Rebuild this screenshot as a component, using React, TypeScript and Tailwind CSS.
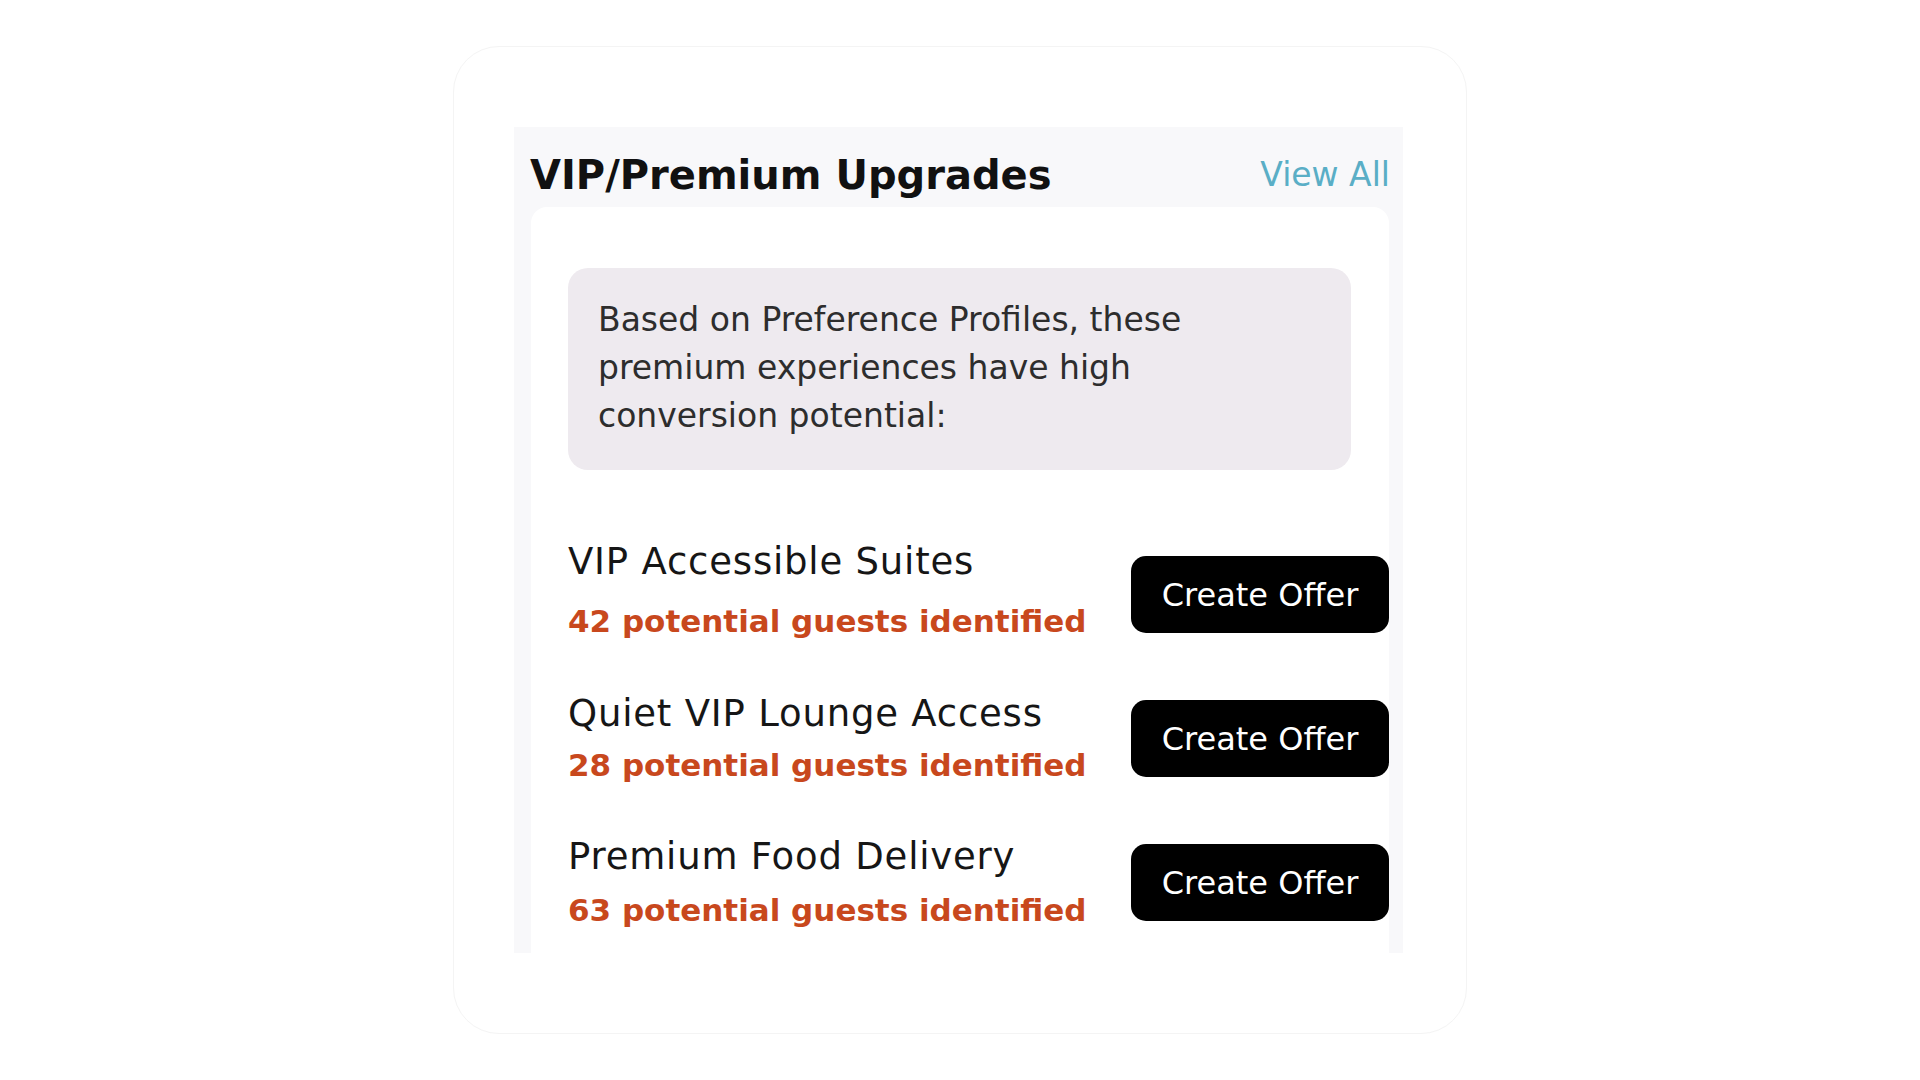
import React from "react";

const rows = [
  { name: "VIP Accessible Suites", count: "42 potential guests identified", gap: "gap-[17px]", mt: "mt-[70px]", btn: "mt-[8px]" },
  { name: "Quiet VIP Lounge Access", count: "28 potential guests identified", gap: "gap-[9px]", mt: "mt-[51px]", btn: "mt-0" },
  { name: "Premium Food Delivery", count: "63 potential guests identified", gap: "gap-[11px]", mt: "mt-[50px]", btn: "mt-0" },
];

export default function App() {
  return (
    <div className="w-full h-[1080px] bg-white flex items-center justify-center" style={{ fontFamily: "'DejaVu Sans', sans-serif" }}>
      <div className="w-[1014px] h-[988px] rounded-[46px] border border-[#f4f4f4] bg-white pl-[60px] pt-[80px]">
        <div className="w-[889px] h-[826px] bg-[#f8f8fa] flex flex-col overflow-hidden">
          <div className="h-[80px] pt-[16px] pl-[16px] pr-[13px] flex items-center justify-between">
            <span className="text-[40px] leading-[48px] font-semibold text-[#111111]">VIP/Premium Upgrades</span>
            <span className="text-[33px] leading-[40px] text-[#5aaec6]">View All</span>
          </div>
          <div className="ml-[17px] w-[858px] flex-1 bg-white rounded-t-[16px] pl-[37px]">
            <div className="mt-[61px] mr-[38px] h-[202px] rounded-[20px] bg-[#eeeaef] pl-[30px] pt-[28px]">
              <p className="w-[680px] text-[33px] leading-[48px] text-[#2d2d2d]">
                Based on Preference Profiles, these premium experiences have high conversion potential:
              </p>
            </div>
            {rows.map((r) => (
              <div key={r.name} className={`${r.mt} flex items-center justify-between`}>
                <div className={`flex flex-col items-start ${r.gap}`}>
                  <span className="text-[37px] leading-[44px] tracking-[0.8px] text-[#161616]">{r.name}</span>
                  <span className="text-[31px] leading-[40px] font-bold text-[#c8481d]">{r.count}</span>
                </div>
                <button className={`${r.btn} w-[258px] h-[77px] rounded-[15px] bg-black text-white text-[32px] leading-[40px]`}>
                  Create Offer
                </button>
              </div>
            ))}
          </div>
        </div>
      </div>
    </div>
  );
}
